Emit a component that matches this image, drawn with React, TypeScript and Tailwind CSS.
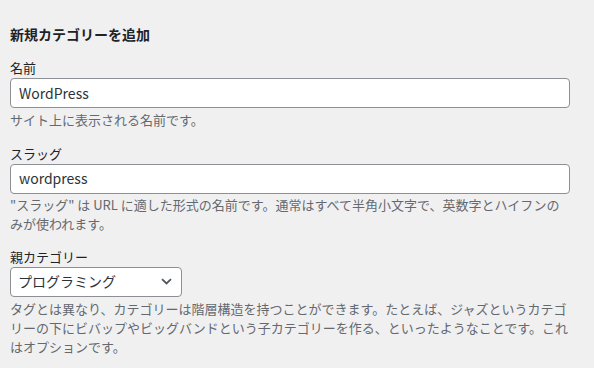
import React from "react";

const font = { fontFamily: '"Noto Sans CJK JP", "Noto Sans", sans-serif' };

export default function App() {
  return (
    <div
      className="w-[594px] h-[368px] overflow-hidden bg-[#f0f0f1] text-[#1d2327]"
      style={font}
    >
      <div className="w-[560px] ml-[10px] pt-[24px]">
        <h2 className="text-[14px] leading-[20px] font-bold mb-[14px]">新規カテゴリーを追加</h2>

        <div className="mb-[14px]">
          <label className="block text-[13px] leading-[20px]">名前</label>
          <div className="h-[30px] w-full rounded-[4px] border border-[#8c8f94] bg-white px-[8px] flex items-center text-[14px] text-[#2c3338]">
            WordPress
          </div>
          <p className="mt-[2px] text-[13px] leading-[19.5px] text-[#646970]">サイト上に表示される名前です。</p>
        </div>

        <div className="mb-[13px]">
          <label className="block text-[13px] leading-[20px]">スラッグ</label>
          <div className="h-[30px] w-full rounded-[4px] border border-[#8c8f94] bg-white px-[8px] flex items-center text-[14px] text-[#2c3338]">
            wordpress
          </div>
          <p className="mt-[1px] text-[13px] leading-[19.5px] text-[#646970]">
            "スラッグ" は URL に適した形式の名前です。通常はすべて半角小文字で、英数字とハイフンのみが使われます。
          </p>
        </div>

        <div>
          <label className="block text-[13px] leading-[20px]">親カテゴリー</label>
          <div className="h-[30px] w-[172px] rounded-[4px] border border-[#8c8f94] bg-white pl-[7px] pr-[8px] flex items-center justify-between text-[14px] text-[#2c3338]">
            <span>プログラミング</span>
            <svg width="11" height="7" viewBox="0 0 11 7" className="mr-[1px]">
              <path d="M1 1.2 L5.5 5.5 L10 1.2" fill="none" stroke="#50575e" strokeWidth="1.8" />
            </svg>
          </div>
          <p className="mt-[2px] text-[13px] leading-[19px] text-[#646970]">
            タグとは異なり、カテゴリーは階層構造を持つことができます。たとえば、ジャズというカテゴリーの下にビバップやビッグバンドという子カテゴリーを作る、といったようなことです。これはオプションです。
          </p>
        </div>
      </div>
    </div>
  );
}
